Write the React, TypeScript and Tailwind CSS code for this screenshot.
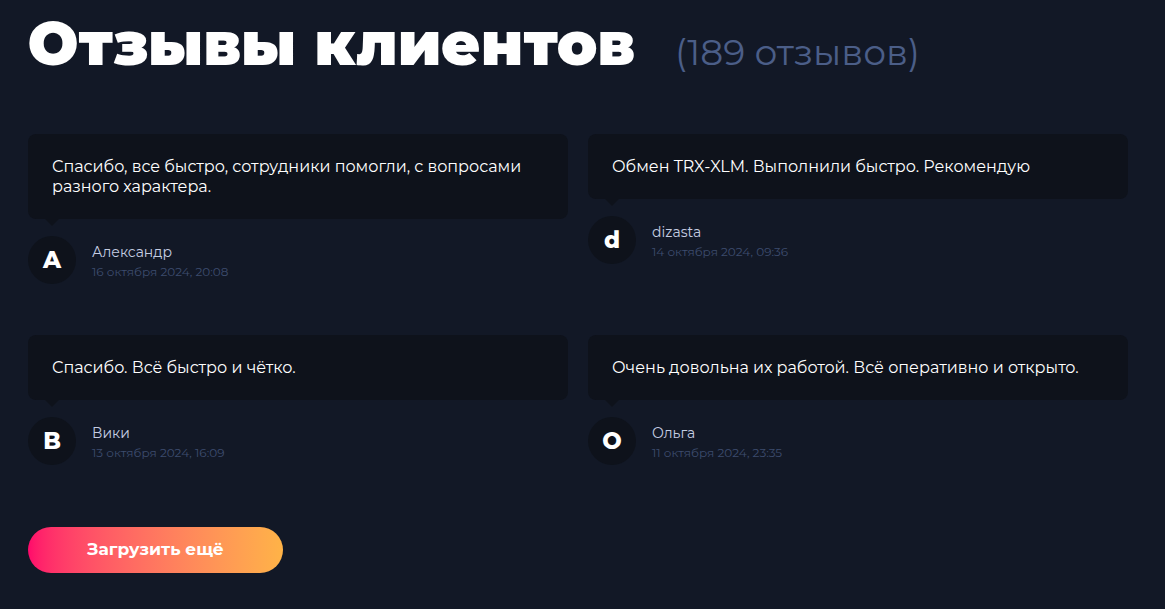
import React from 'react';

type Review = {
  initial: string;
  name: string;
  date: string;
  text: string;
};

const reviews: Review[] = [
  {
    initial: 'A',
    name: 'Александр',
    date: '16 октября 2024, 20:08',
    text: 'Спасибо, все быстро, сотрудники помогли, с вопросами разного характера.',
  },
  {
    initial: 'd',
    name: 'dizasta',
    date: '14 октября 2024, 09:36',
    text: 'Обмен TRX-XLM. Выполнили быстро. Рекомендую',
  },
  {
    initial: 'B',
    name: 'Вики',
    date: '13 октября 2024, 16:09',
    text: 'Спасибо. Всё быстро и чётко.',
  },
  {
    initial: 'O',
    name: 'Ольга',
    date: '11 октября 2024, 23:35',
    text: 'Очень довольна их работой. Всё оперативно и открыто.',
  },
];

function ReviewCard({ review }: { review: Review }) {
  return (
    <div className="flex flex-col">
      <div className="relative rounded-lg bg-[#0e121b] px-6 pt-[23px] pb-[22px]">
        <p className="pr-4 text-[16px] font-normal leading-[20px] text-white">{review.text}</p>
        {/* хвостик пузыря */}
        <span className="absolute left-[17px] top-full h-0 w-0 border-x-[7px] border-t-[7px] border-x-transparent border-t-[#0e121b]" />
      </div>
      <div className="mt-[17px] flex items-center gap-4">
        <div className="flex h-12 w-12 items-center justify-center rounded-full bg-[#0e121b] text-[23px] font-extrabold text-white">
          {review.initial}
        </div>
        <div className="flex flex-col pt-[3px]">
          <span className="text-[14px] leading-[19px] text-[#c5cde2]">{review.name}</span>
          <span className="text-[12px] leading-[19px] text-[#3d4c6e]">{review.date}</span>
        </div>
      </div>
    </div>
  );
}

export default function App() {
  return (
    <div
      className="min-h-screen bg-[#121826] px-[28px] pt-[12px] pb-10"
      style={{ fontFamily: '"Montserrat", Inter, "Noto Sans", sans-serif' }}
    >
      <div className="flex items-baseline gap-10">
        <h1 className="text-[60px] font-black leading-[64px] text-white">Отзывы клиентов</h1>
        <span className="text-[36px] font-normal text-[#4b5e88]">(189 отзывов)</span>
      </div>

      <div className="mt-[55px] grid w-[1100px] grid-cols-2 gap-x-5 gap-y-[51px]">
        {reviews.map((r) => (
          <ReviewCard key={r.name} review={r} />
        ))}
      </div>

      <button className="mt-[62px] flex h-[46px] w-[255px] items-center justify-center rounded-full bg-gradient-to-r from-[#ff066b] to-[#ffb347] text-[17px] font-bold text-white">
        Загрузить ещё
      </button>
    </div>
  );
}
